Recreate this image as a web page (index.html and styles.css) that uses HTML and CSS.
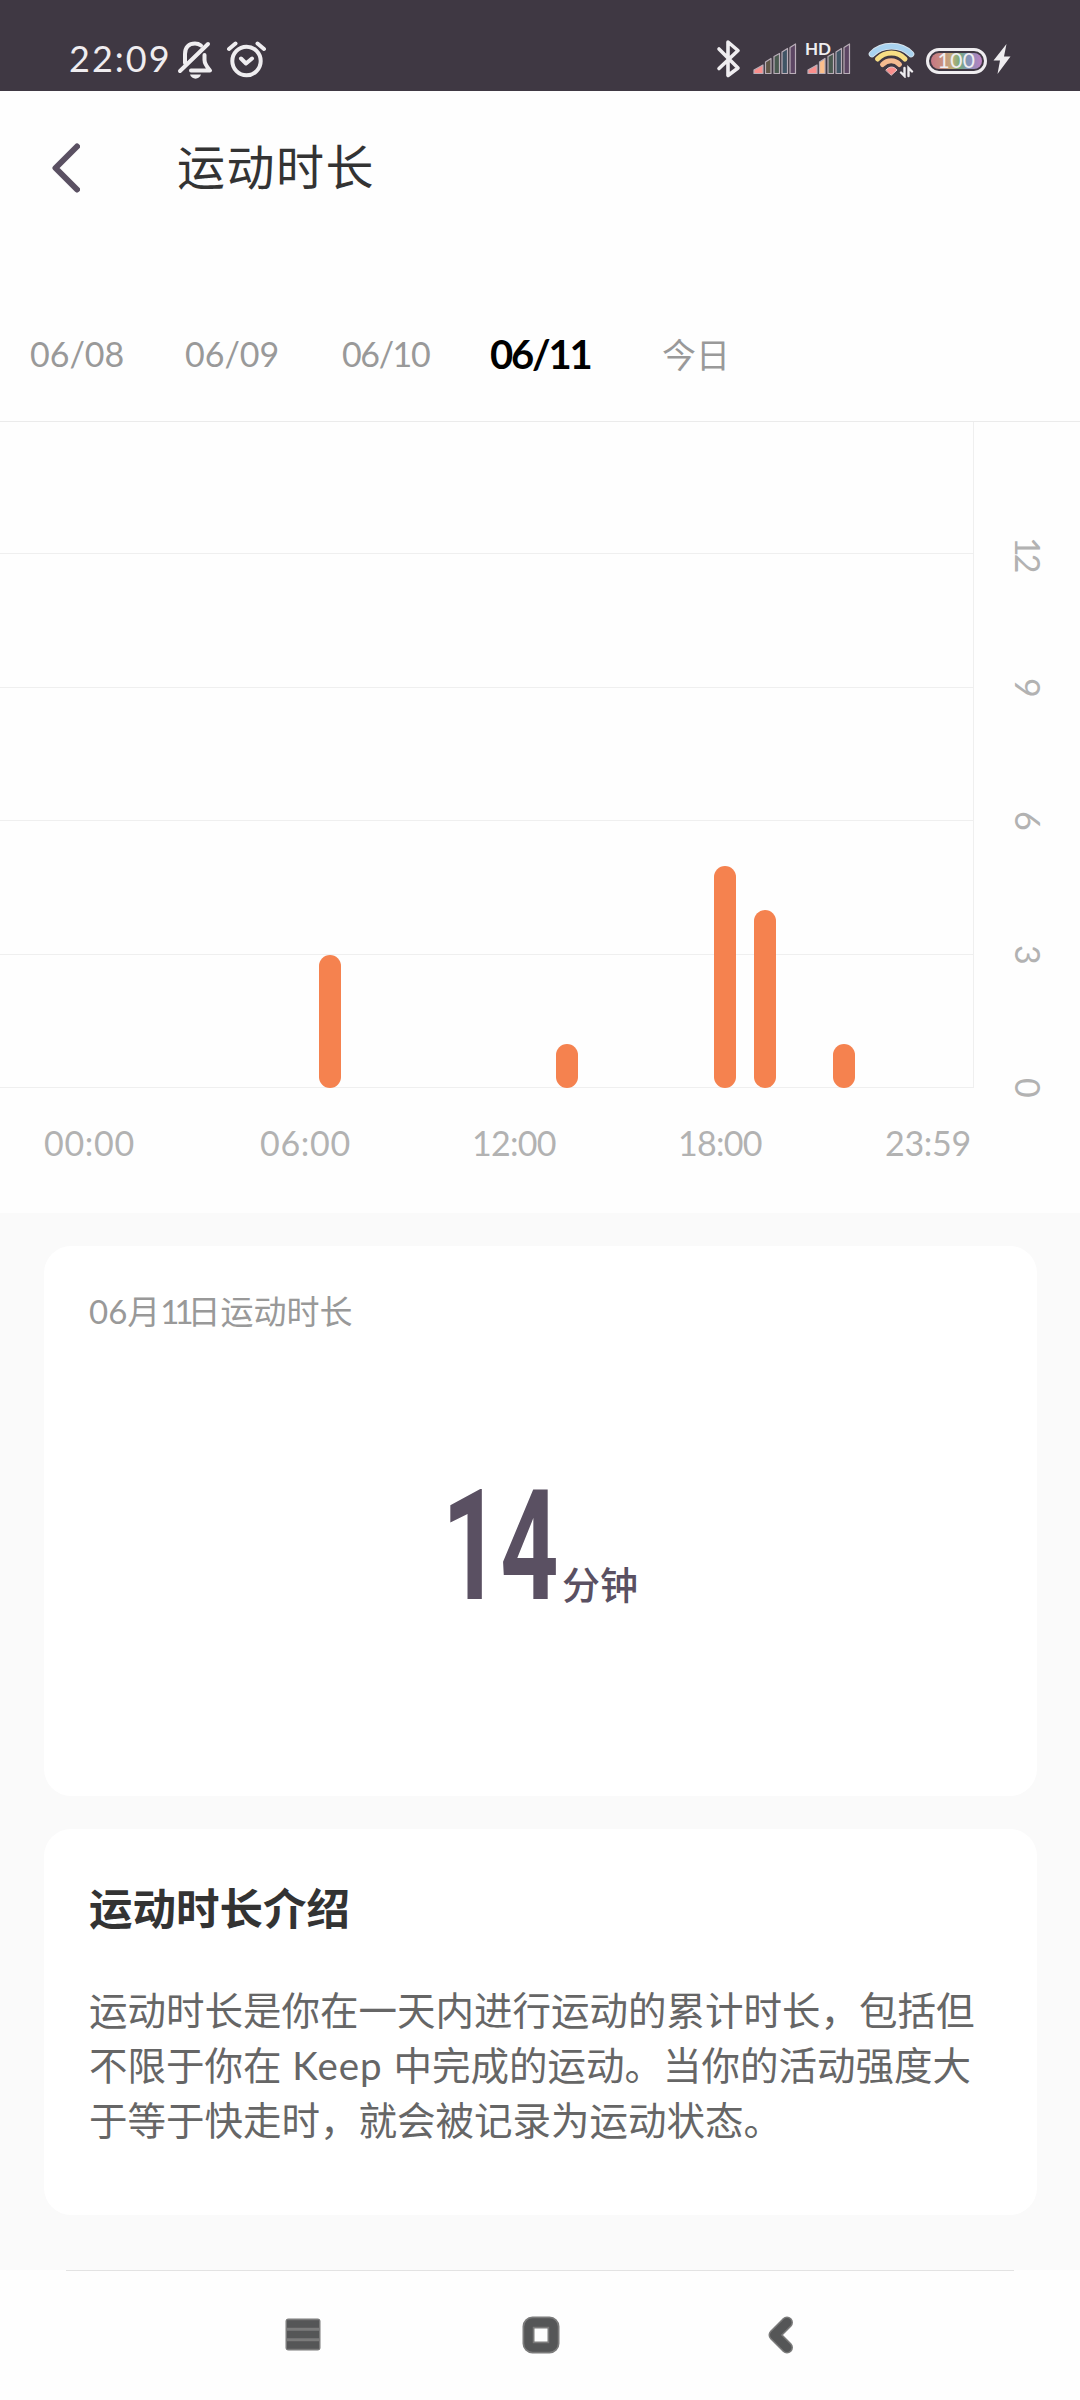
FILE: index.html
```html
<!DOCTYPE html>
<html lang="zh-CN">
<head>
  <meta charset="UTF-8" />
  <meta name="viewport" content="width=device-width, initial-scale=1.0"/>
  <title>运动时长</title>
  <link rel="stylesheet" href="styles.css">
</head>
<body>

  <div class="status-bar">
    <span class="clock">22:09</span>
    <svg class="icon-bell" width="36" height="40" viewBox="0 0 36 40" fill="none" stroke="#efedf0" stroke-width="4" stroke-linecap="round" stroke-linejoin="round">
      <path d="M3 31L31 4"/>
      <path d="M8 23V14C8 7 12 3.500 18 3.500C20 3.500 22 4 24 5.500"/>
      <path d="M27.500 15V20C27.500 24 30 27 33 30.500H14"/>
      <path d="M13 34.500H24C22.500 40 14.500 40 13 34.500Z" fill="#efedf0" stroke="none"/>
    </svg>
    <svg class="icon-alarm" width="42" height="38" viewBox="0 0 42 38" fill="none" stroke="#efedf0" stroke-width="4" stroke-linecap="round" stroke-linejoin="round">
      <circle cx="20.500" cy="21" r="14.200"/>
      <path d="M15 18.500L20 23.500L26 18.500M3 9L9.500 3.500M31.500 3.500L38 9"/>
    </svg>

    <div class="status-right">
      <svg class="icon-bt" width="26" height="40" viewBox="0 0 26 40" fill="none" stroke="#efedf0" stroke-width="3.600" stroke-linecap="round" stroke-linejoin="round">
        <path d="M3 10L22 29L12 36.500V3L22 11.500L3 29.500"/>
      </svg>
      <svg class="icon-signal" width="44" height="32" viewBox="0 0 44 32" stroke="#b9aeb8" stroke-width="1.200" stroke-linejoin="round">
        <path fill="#fb8f8d" d="M1 30.500V27L10 22V30.500Z"/>
        <path fill="#5f5647" d="M12.500 30.500V19L18 15.500V30.500Z"/>
        <path fill="#4a5a50" d="M21 30.500V13.500L26.500 10.500V30.500Z"/>
        <path fill="#405565" d="M29 30.500V9L34.500 5.500V30.500Z"/>
        <path fill="#5c4663" d="M37 30.500V4.500L42.500 1V30.500Z"/>
      </svg>
      <div class="signal-hd">
        <span class="hd">HD</span>
        <svg width="44" height="32" viewBox="0 0 44 32" stroke="#b9aeb8" stroke-width="1.200" stroke-linejoin="round">
          <path fill="#fb8f8d" d="M1 30.500V27L10 22V30.500Z"/>
          <path fill="#fcbf8b" d="M12.500 30.500V19L18 15.500V30.500Z"/>
          <path fill="#4a5a50" d="M21 30.500V13.500L26.500 10.500V30.500Z"/>
          <path fill="#405565" d="M29 30.500V9L34.500 5.500V30.500Z"/>
          <path fill="#5c4663" d="M37 30.500V4.500L42.500 1V30.500Z"/>
        </svg>
      </div>
      <svg class="icon-wifi" width="48" height="36" viewBox="0 0 48 36" fill="none" stroke-linecap="round">
        <path stroke="#d9e4ec" stroke-width="6.600" d="M4 12C14 1.500 33 1.500 43 12"/>
        <path stroke="#a9d3f0" stroke-width="5" d="M4 12C14 1.500 33 1.500 43 12"/>
        <path stroke="#f7de84" stroke-width="5" d="M9.500 17C17 9 30 9 37 17"/>
        <path stroke="#f5bb90" stroke-width="5" d="M14.500 22.500C19.500 17.500 27 17.500 31.500 22.500"/>
        <path fill="#fb8f8d" stroke="#e8c8c8" stroke-width="1" d="M18 28C21 24 26 24 29 28L23.500 33Z"/>
        <g stroke="#efedf0" stroke-width="2.400">
          <path d="M36.500 26V34L33 30.500M40.500 34V26L44 29.500"/>
        </g>
      </svg>
      <div class="battery"><span>100</span></div>
      <svg class="icon-bolt" width="18" height="32" viewBox="0 0 18 32">
        <path fill="#efedf0" d="M13.500 1L0.500 17.500H7L4.500 31L17.500 13.500H11Z"/>
      </svg>
    </div>
  </div>

  <div class="header">
    <svg class="icon-back" width="30" height="52" viewBox="0 0 30 52" fill="none" stroke="#5a5062" stroke-width="6" stroke-linecap="round" stroke-linejoin="round">
      <path d="M27 4.500L5.500 26L27 47.500"/>
    </svg>
    <h1>运动时长</h1>
  </div>

  <div class="tabs">
    <span>06/08</span>
    <span>06/09</span>
    <span class="narrow">06/10</span>
    <span class="active">06/11</span>
    <span>今日</span>
  </div>

  <div class="chart">
    <div class="plot">
      <div class="grid-lines">
        <i></i><i></i><i></i><i></i><i></i>
      </div>
      <!-- one column per hour, 1 minute = 44.4px -->
      <div class="bars">
        <div class="bar" style="grid-column: 8; height: 133px"></div>
        <div class="bar" style="grid-column: 14; height: 44px"></div>
        <div class="bar" style="grid-column: 18; height: 222px"></div>
        <div class="bar" style="grid-column: 19; height: 178px"></div>
        <div class="bar" style="grid-column: 21; height: 44px"></div>
      </div>
    </div>
    <div class="y-axis">
      <span class="narrow">12</span>
      <span>9</span>
      <span>6</span>
      <span>3</span>
      <span>0</span>
    </div>
  </div>
  <div class="x-axis">
    <span>00:00</span>
    <span>06:00</span>
    <span class="narrow">12:00</span>
    <span class="narrow">18:00</span>
    <span class="last">23:59</span>
  </div>

  <div class="content">
    <div class="card total">
      <p class="card-label">06月<span class="day">11</span>日运动时长</p>
      <div class="value">
        <span class="number">14</span>
        <span class="unit">分钟</span>
      </div>
    </div>

    <div class="card intro">
      <h2>运动时长介绍</h2>
      <p>运动时长是你在一天内进行运动的累计时长，包括但<br>不限于你在<span class="latin"> Keep </span>中完成的运动。当你的活动强度大<br>于等于快走时，就会被记录为运动状态。</p>
    </div>
  </div>

  <div class="nav-bar">
    <svg class="nav-menu" width="36" height="34" viewBox="0 0 36 34">
      <rect x="0.500" y="0.500" width="35" height="32" rx="3" fill="#7b7b7b"/>
      <path stroke="#555657" stroke-width="7.500" d="M2 6H34M2 16.500H34M2 27H34"/>
    </svg>
    <svg class="nav-home" width="38" height="38" viewBox="0 0 38 38">
      <rect x="6.500" y="6.500" width="25" height="25" rx="4" fill="none" stroke="#7b7b7b" stroke-width="12"/>
      <rect x="6.500" y="6.500" width="25" height="25" rx="4" fill="none" stroke="#555657" stroke-width="8.500"/>
    </svg>
    <svg class="nav-back" width="26" height="38" viewBox="0 0 26 38" fill="none" stroke-linecap="round" stroke-linejoin="round">
      <path stroke="#7b7b7b" stroke-width="12" d="M19 6.500L6.500 19L19 31.500"/>
      <path stroke="#555657" stroke-width="9" d="M19 6.500L6.500 19L19 31.500"/>
    </svg>
  </div>

</body>
</html>
```
FILE: styles.css
```css
* {
  margin: 0;
  padding: 0;
  box-sizing: border-box;
}

body {
  width: 1080px;
  height: 2400px;
  overflow: hidden;
  background: #fefefe;
  color: #333;
  font-family: Lato, 'Noto Sans CJK SC', sans-serif;
}

svg {
  display: block;
  flex: none;
}

/* status bar */
.status-bar {
  display: flex;
  align-items: flex-start;
  height: 91px;
  padding: 40px 69px 0;
  background: #3f3843;
  color: #efedf0;
}

.clock {
  width: 108px;
  font-size: 36px;
  line-height: 36px;
  letter-spacing: 2px;
}

.icon-alarm {
  margin-left: 13px;
}

.status-right {
  display: flex;
  align-items: flex-start;
  margin-left: auto;
}

.icon-bt {
  margin-top: -1px;
}

.icon-signal {
  margin: 3px 0 0 11px;
}

.signal-hd {
  position: relative;
  margin: 3px 0 0 10px;
}

.hd {
  position: absolute;
  left: -2px;
  top: -2px;
  z-index: 1;
  font-size: 17px;
  line-height: 16px;
  font-weight: bold;
}

.icon-wifi {
  margin: 2px 0 0 17px;
}

.battery {
  width: 61px;
  height: 26px;
  margin: 8px 0 0 10px;
  border: 3px solid #efedf0;
  border-radius: 13px;
  padding: 2px;
  background: linear-gradient(90deg, #c77785, #c7967e 28%, #bfae79 42%, #77ab7c 56%, #8194b8 72%, #bd80c0) content-box #3f3843;
  text-align: center;
}

.battery span {
  display: block;
  font-size: 21px;
  line-height: 13px;
  letter-spacing: 0.5px;
}

.icon-bolt {
  margin: 3px 0 0 6px;
}

/* title */
.header {
  display: flex;
  align-items: center;
  height: 153px;
  padding-left: 50px;
}

.header h1 {
  margin: -8px 0 0 97px;
  font-size: 48px;
  font-weight: 400;
  letter-spacing: 1.5px;
}

.tabs {
  display: grid;
  grid-template-columns: 155px 157px 148px 172px auto;
  align-items: center;
  height: 178px;
  padding: 44px 0 3px 30px;
  margin-bottom: -1px;
  color: #999;
  font-size: 34px;
}

.tabs .narrow {
  letter-spacing: -1.4px;
}

.tabs .active {
  color: #000;
  font-size: 40px;
  font-weight: bold;
  letter-spacing: -2.2px;
}

/* chart */
.chart {
  display: flex;
  height: 667px;
  border-top: 1px solid #ebebeb;
}

.plot {
  display: grid;
  grid-template-columns: 100%;
  width: 974px;
  border-right: 1px solid #efefef;
}

.grid-lines,
.bars {
  grid-area: 1 / 1;
}

.grid-lines {
  display: grid;
  grid-template-rows: 132px 134px 133px 134px 133px;
}

.grid-lines i {
  border-bottom: 1px solid #efefef;
}

.bars {
  display: grid;
  grid-template-columns: repeat(24, 39.5px);
  align-items: end;
  justify-items: center;
  padding-left: 34px;
}

.bar {
  width: 22px;
  border-radius: 11px;
  background: #f5824f;
}

.y-axis {
  display: flex;
  flex-direction: column;
  justify-content: space-between;
  align-items: center;
  width: 106px;
  padding: 92px 0 0 2px;
  margin-bottom: -40px;
  color: #b2b2b2;
  font-size: 34px;
}

.y-axis span {
  display: flex;
  align-items: center;
  justify-content: center;
  width: 40px;
  height: 80px;
  writing-mode: vertical-rl;
}

.y-axis .narrow {
  letter-spacing: -3px;
}

.x-axis {
  display: grid;
  grid-template-columns: 216px 212px 206px 207px auto;
  height: 125px;
  padding: 35px 0 0 44px;
  color: #b2b2b2;
  font-size: 34px;
  line-height: 40px;
  letter-spacing: 0.7px;
}

.x-axis .narrow {
  letter-spacing: -0.7px;
}

.x-axis .last {
  letter-spacing: -0.3px;
}

/* cards */
.content {
  height: 1057px;
  padding: 33px 43px 0 44px;
  background: #fafafa;
}

.card {
  border-radius: 27px;
  background: #fff;
}

.total {
  height: 550px;
  padding: 45px 45px 0;
}

.card-label {
  color: #999;
  font-size: 33px;
  line-height: 40px;
}

.day {
  margin-right: -1px;
  letter-spacing: -5px;
}

.value {
  display: flex;
  align-items: baseline;
  margin: 126px 0 0 353px;
  color: #5a5062;
}

.number {
  width: 120px;
  font-family: Roboto, sans-serif;
  font-size: 154px;
  line-height: 180px;
  font-weight: bold;
  transform: scaleX(0.66);
  transform-origin: 0 0;
}

.unit {
  font-size: 38px;
  font-weight: 500;
}

.intro {
  height: 386px;
  margin-top: 33px;
  padding: 53px 44px 0 45px;
}

.intro h2 {
  font-size: 43.5px;
  line-height: 52px;
  font-weight: bold;
}

.intro p {
  margin-top: 49px;
  color: #666;
  font-size: 38.5px;
  line-height: 55px;
  white-space: nowrap;
}

.latin {
  letter-spacing: 1px;
}

/* bottom navigation */
.nav-bar {
  position: relative;
  display: flex;
  align-items: center;
  height: 130px;
  padding-left: 285px;
}

.nav-bar::before {
  content: '';
  position: absolute;
  left: 66px;
  right: 66px;
  top: 0;
  height: 1px;
  background: #e3e3e3;
}

.nav-home {
  margin-left: 201px;
}

.nav-back {
  margin-left: 208px;
}
```
